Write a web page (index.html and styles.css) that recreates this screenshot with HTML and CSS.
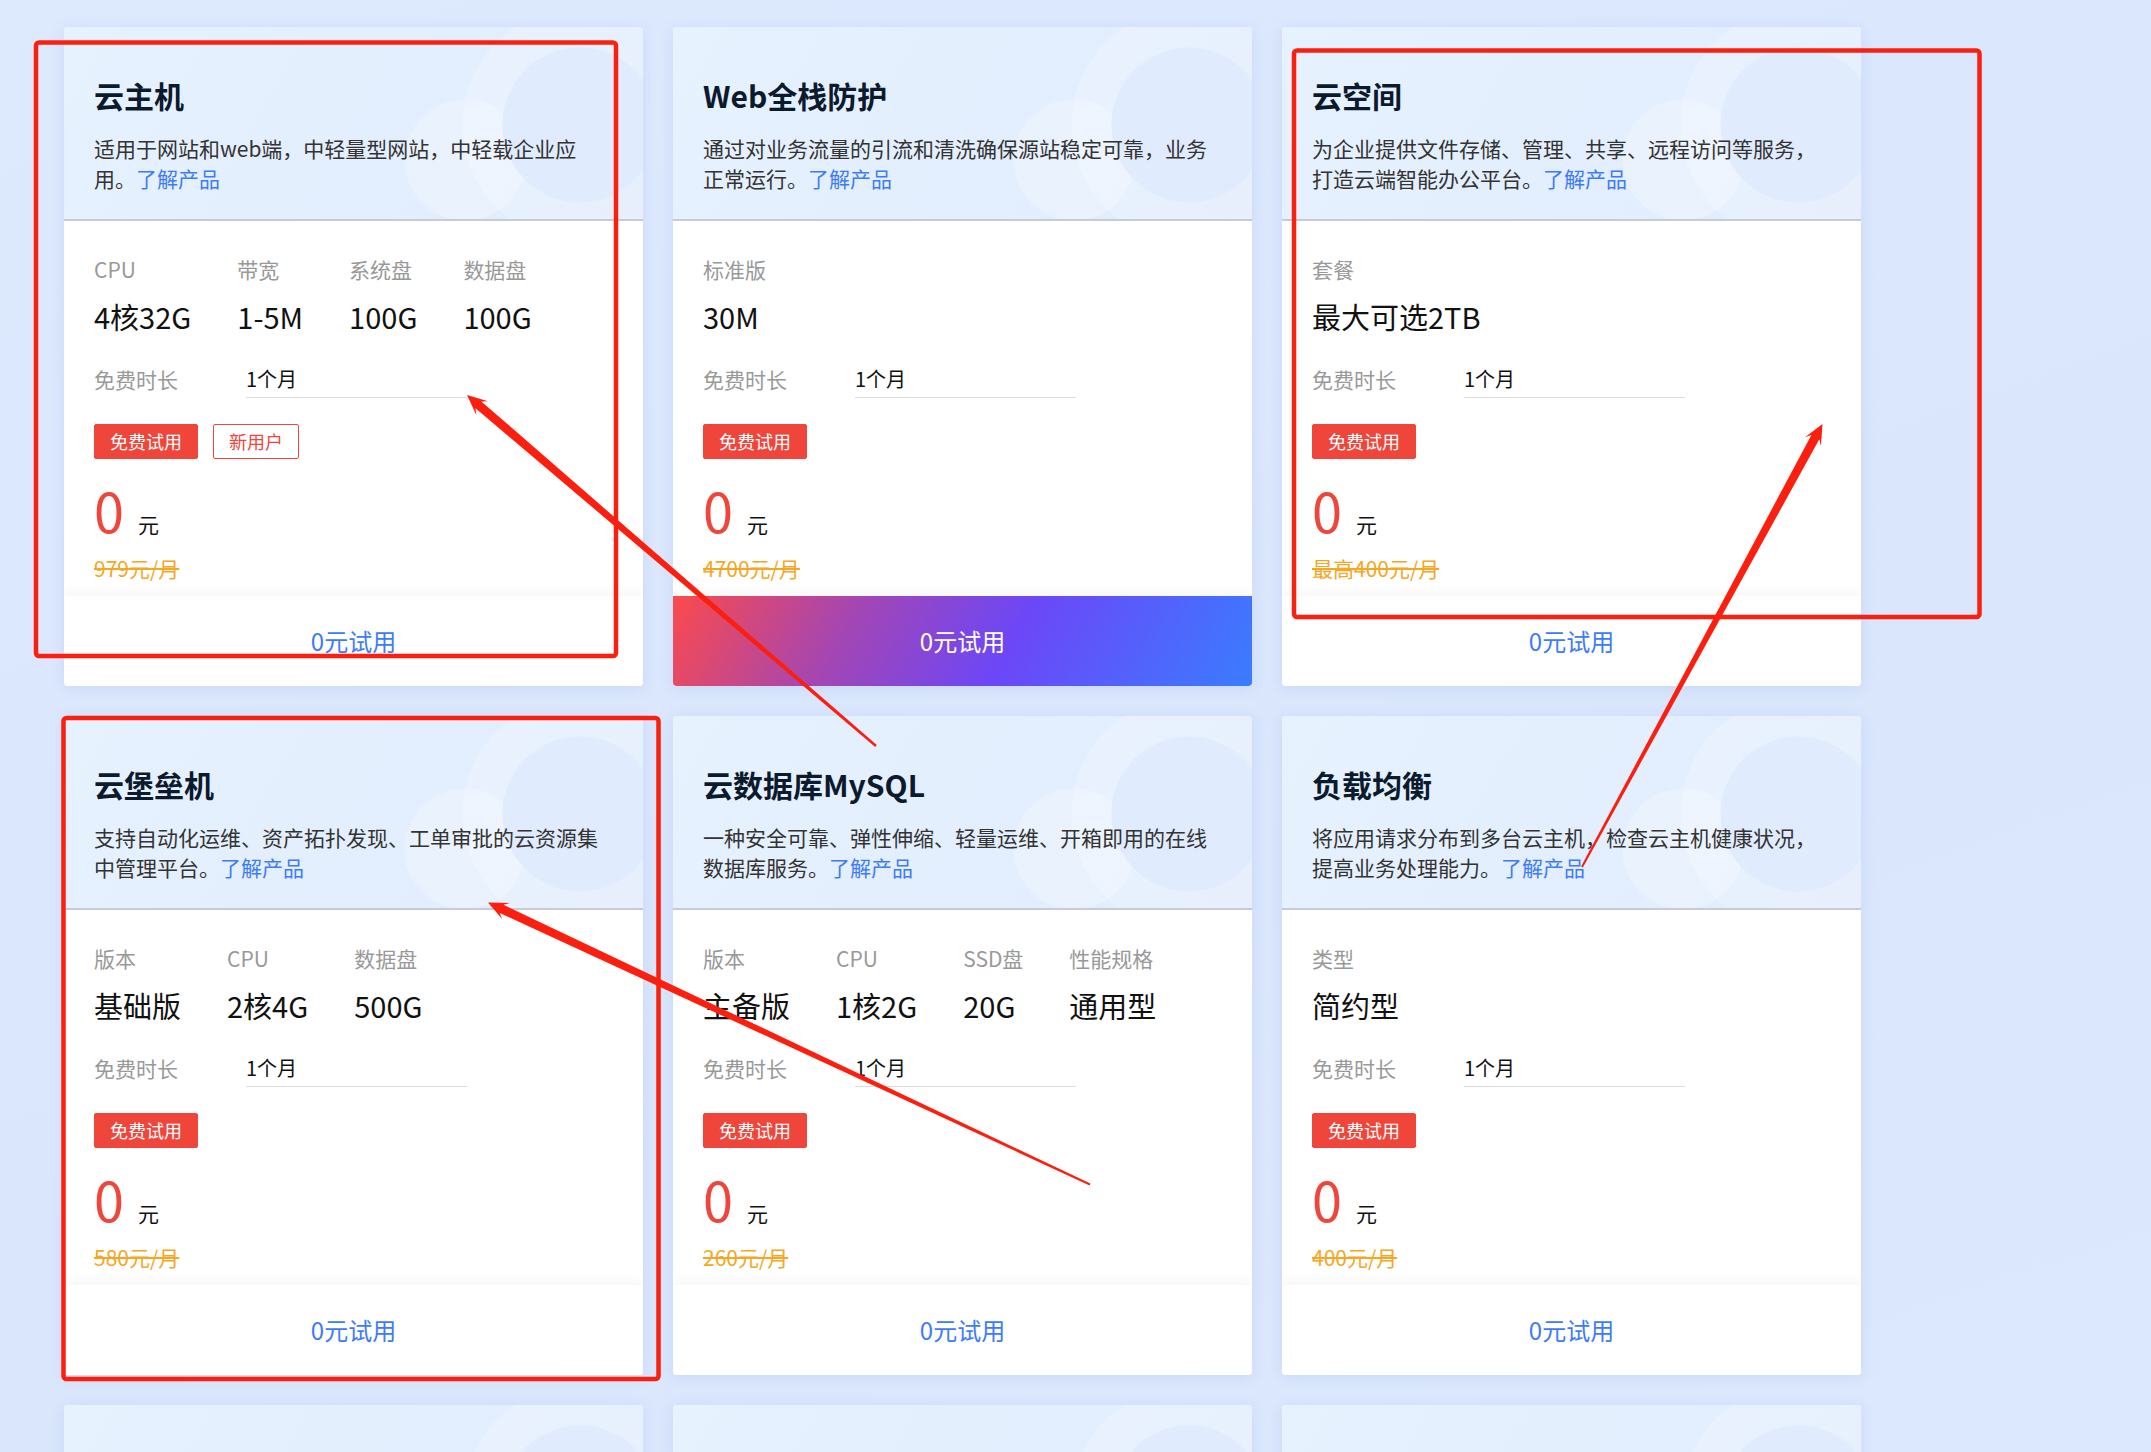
FILE: index.html
```html
<!DOCTYPE html>
<html lang="zh-CN">
<head>
    <meta charset="UTF-8">
    <meta name="viewport" content="width=device-width, initial-scale=1.0">
    <title>免费试用 - 云产品</title>
    <link rel="stylesheet" href="styles.css">
</head>
<body>
    <div class="page">
        <section class="product-list">
            <!-- 云主机 -->
            <div class="product-card">
                <div class="card-head">
                    <h3 class="card-title">云主机</h3>
                    <p class="card-desc">适用于网站和web端，中轻量型网站，中轻载企业应用。<a href="#">了解产品</a></p>
                </div>
                <div class="card-body">
                    <ul class="spec-list">
                        <li><span class="spec-label">CPU</span><span class="spec-value">4核32G</span></li>
                        <li><span class="spec-label">带宽</span><span class="spec-value">1-5M</span></li>
                        <li><span class="spec-label">系统盘</span><span class="spec-value">100G</span></li>
                        <li><span class="spec-label">数据盘</span><span class="spec-value">100G</span></li>
                    </ul>
                    <div class="duration"><span class="duration-label">免费时长</span><span class="duration-value">1个月</span></div>
                    <div class="tags"><span class="tag tag-fill">免费试用</span><span class="tag tag-line">新用户</span></div>
                    <div class="price"><span class="price-num">0</span><span class="price-unit">元</span></div>
                    <div class="price-origin">979元/月</div>
                </div>
                <a class="card-foot" href="#">0元试用</a>
            </div>

            <!-- Web全栈防护 -->
            <div class="product-card">
                <div class="card-head">
                    <h3 class="card-title">Web全栈防护</h3>
                    <p class="card-desc">通过对业务流量的引流和清洗确保源站稳定可靠，业务正常运行。<a href="#">了解产品</a></p>
                </div>
                <div class="card-body">
                    <ul class="spec-list">
                        <li><span class="spec-label">标准版</span><span class="spec-value">30M</span></li>
                    </ul>
                    <div class="duration"><span class="duration-label">免费时长</span><span class="duration-value">1个月</span></div>
                    <div class="tags"><span class="tag tag-fill">免费试用</span></div>
                    <div class="price"><span class="price-num">0</span><span class="price-unit">元</span></div>
                    <div class="price-origin">4700元/月</div>
                </div>
                <a class="card-foot active" href="#">0元试用</a>
            </div>

            <!-- 云空间 -->
            <div class="product-card">
                <div class="card-head">
                    <h3 class="card-title">云空间</h3>
                    <p class="card-desc">为企业提供文件存储、管理、共享、远程访问等服务，打造云端智能办公平台。<a href="#">了解产品</a></p>
                </div>
                <div class="card-body">
                    <ul class="spec-list">
                        <li><span class="spec-label">套餐</span><span class="spec-value">最大可选2TB</span></li>
                    </ul>
                    <div class="duration"><span class="duration-label">免费时长</span><span class="duration-value">1个月</span></div>
                    <div class="tags"><span class="tag tag-fill">免费试用</span></div>
                    <div class="price"><span class="price-num">0</span><span class="price-unit">元</span></div>
                    <div class="price-origin">最高400元/月</div>
                </div>
                <a class="card-foot" href="#">0元试用</a>
            </div>

            <!-- 云堡垒机 -->
            <div class="product-card">
                <div class="card-head">
                    <h3 class="card-title">云堡垒机</h3>
                    <p class="card-desc">支持自动化运维、资产拓扑发现、工单审批的云资源集中管理平台。<a href="#">了解产品</a></p>
                </div>
                <div class="card-body">
                    <ul class="spec-list">
                        <li><span class="spec-label">版本</span><span class="spec-value">基础版</span></li>
                        <li><span class="spec-label">CPU</span><span class="spec-value">2核4G</span></li>
                        <li><span class="spec-label">数据盘</span><span class="spec-value">500G</span></li>
                    </ul>
                    <div class="duration"><span class="duration-label">免费时长</span><span class="duration-value">1个月</span></div>
                    <div class="tags"><span class="tag tag-fill">免费试用</span></div>
                    <div class="price"><span class="price-num">0</span><span class="price-unit">元</span></div>
                    <div class="price-origin">580元/月</div>
                </div>
                <a class="card-foot" href="#">0元试用</a>
            </div>

            <!-- 云数据库MySQL -->
            <div class="product-card">
                <div class="card-head">
                    <h3 class="card-title">云数据库MySQL</h3>
                    <p class="card-desc">一种安全可靠、弹性伸缩、轻量运维、开箱即用的在线数据库服务。<a href="#">了解产品</a></p>
                </div>
                <div class="card-body">
                    <ul class="spec-list">
                        <li><span class="spec-label">版本</span><span class="spec-value">主备版</span></li>
                        <li><span class="spec-label">CPU</span><span class="spec-value">1核2G</span></li>
                        <li><span class="spec-label">SSD盘</span><span class="spec-value">20G</span></li>
                        <li><span class="spec-label">性能规格</span><span class="spec-value">通用型</span></li>
                    </ul>
                    <div class="duration"><span class="duration-label">免费时长</span><span class="duration-value">1个月</span></div>
                    <div class="tags"><span class="tag tag-fill">免费试用</span></div>
                    <div class="price"><span class="price-num">0</span><span class="price-unit">元</span></div>
                    <div class="price-origin">260元/月</div>
                </div>
                <a class="card-foot" href="#">0元试用</a>
            </div>

            <!-- 负载均衡 -->
            <div class="product-card">
                <div class="card-head">
                    <h3 class="card-title">负载均衡</h3>
                    <p class="card-desc">将应用请求分布到多台云主机，检查云主机健康状况，提高业务处理能力。<a href="#">了解产品</a></p>
                </div>
                <div class="card-body">
                    <ul class="spec-list">
                        <li><span class="spec-label">类型</span><span class="spec-value">简约型</span></li>
                    </ul>
                    <div class="duration"><span class="duration-label">免费时长</span><span class="duration-value">1个月</span></div>
                    <div class="tags"><span class="tag tag-fill">免费试用</span></div>
                    <div class="price"><span class="price-num">0</span><span class="price-unit">元</span></div>
                    <div class="price-origin">400元/月</div>
                </div>
                <a class="card-foot" href="#">0元试用</a>
            </div>

            <!-- next row, cut off by the window -->
            <div class="product-card"><div class="card-head card-head-empty"></div></div>
            <div class="product-card"><div class="card-head card-head-empty"></div></div>
            <div class="product-card"><div class="card-head card-head-empty"></div></div>
        </section>

        <!-- review marks drawn over the page -->
        <svg class="marks" width="2151" height="1452" viewBox="0 0 2151 1452">
            <g fill="none" stroke="#fb1f10" stroke-width="4.5">
                <rect x="36" y="42.5" width="580" height="613.5" rx="3"/>
                <rect x="1294" y="50.5" width="685.5" height="566.5" rx="3"/>
                <rect x="63.5" y="718" width="595" height="661" rx="3"/>
            </g>
            <g fill="#fb1f10">
                <polygon points="467,395 476.3,414.9 475.5,408.2 875.2,746.9 876.8,745.1 481.3,401.4 488,401.2"/>
                <polygon points="488,902.5 502.3,919.2 499.7,912.9 1089.6,1185.4 1090.4,1183.6 503.5,904.8 509.9,902.9"/>
                <polygon points="1822.5,424 1805,437.3 1811.4,435 1581.1,866.5 1582.9,867.5 1819.3,439.3 1820.9,445.9"/>
            </g>
        </svg>
    </div>
</body>
</html>
```

FILE: styles.css
```css
/* General */
body {
    margin: 0;
    padding: 0;
    background: #dce8fd;
    font-family: "Noto Sans CJK SC", "Noto Sans", sans-serif;
    color: #222;
}

.page {
    position: relative;
    height: 1452px;
    overflow: hidden;
    background: linear-gradient(160deg, #dde9fd 0%, #d9e6fc 60%, #dce8fd 100%);
}

/* Product grid */
.product-list {
    display: grid;
    grid-template-columns: repeat(3, 579px);
    column-gap: 30px;
    row-gap: 30px;
    padding: 27px 0 0 64px;
}

.product-card {
    display: flex;
    flex-direction: column;
    background: #fff;
    border-radius: 4px;
    overflow: hidden;
    box-shadow: 0 2px 14px rgba(120, 150, 215, 0.18);
}

/* Card head */
.card-head {
    position: relative;
    padding: 48px 30px 26px;
    border-bottom: 2px solid #c6ccd7;
    background:
        radial-gradient(circle at 516px 98px, #e0ebfd 0, #e0ebfd 77px, rgba(224, 235, 253, 0) 78px),
        radial-gradient(circle at 516px 98px, rgba(255, 255, 255, 0.22) 0, rgba(255, 255, 255, 0.22) 117px, rgba(255, 255, 255, 0) 118px),
        radial-gradient(circle at 401px 133px, rgba(255, 255, 255, 0.26) 0, rgba(255, 255, 255, 0.26) 60px, rgba(255, 255, 255, 0) 61px),
        linear-gradient(120deg, #e7f2ff 0%, #e0ebfd 100%);
}

.card-head-empty {
    height: 120px;
    border-bottom: none;
}

.card-title {
    margin: 0;
    font-size: 30px;
    line-height: 40px;
    font-weight: 700;
    color: #0c1a2e;
}

.card-desc {
    margin: 18px 0 0;
    font-size: 21px;
    line-height: 30px;
    color: #333;
}

.card-desc a {
    color: #3d7bfa;
    text-decoration: none;
}

/* Card body */
.card-body {
    padding: 34px 30px 13px;
}

.spec-list {
    display: flex;
    gap: 46px;
    list-style: none;
    margin: 0;
    padding: 0;
}

.spec-list li {
    display: flex;
    flex-direction: column;
}

.spec-label {
    font-size: 21px;
    line-height: 28px;
    color: #999;
}

.spec-value {
    margin-top: 13px;
    font-size: 29px;
    line-height: 40px;
    color: #111;
}

.duration {
    display: flex;
    margin-top: 25px;
}

.duration-label {
    width: 152px;
    font-size: 21px;
    line-height: 36px;
    color: #999;
}

.duration-value {
    width: 221px;
    font-size: 20px;
    line-height: 36px;
    color: #111;
    border-bottom: 1px solid #dcdcdc;
}

.tags {
    display: flex;
    gap: 15px;
    margin-top: 26px;
}

.tag {
    padding: 0 15px;
    font-size: 18px;
    line-height: 33px;
    border: 1px solid #f0453a;
    border-radius: 2px;
}

.tag-fill {
    background: #f0453a;
    color: #fff;
}

.tag-line {
    color: #f0453a;
}

.price {
    display: flex;
    align-items: baseline;
    height: 60px;
    margin-top: 21px;
}

.price-num {
    font-size: 54px;
    line-height: 60px;
    color: #f0453a;
}

.price-unit {
    margin-left: 14px;
    font-size: 21px;
    line-height: 24px;
    color: #111;
}

.price-origin {
    margin-top: 13px;
    font-size: 21px;
    line-height: 30px;
    color: #f5a623;
    text-decoration: line-through;
}

/* Card foot */
.card-foot {
    position: relative;
    display: block;
    height: 90px;
    line-height: 90px;
    text-align: center;
    font-size: 24px;
    color: #3d7bfa;
    text-decoration: none;
    background: #fff;
    box-shadow: 0 -5px 10px rgba(0, 0, 0, 0.035);
}

.card-foot.active {
    color: #fff;
    background: linear-gradient(118deg, #fb4a4c 0%, #a446b3 30%, #6c47f7 58%, #3a7cff 100%);
}

/* Review marks */
.marks {
    position: absolute;
    top: 0;
    left: 0;
    pointer-events: none;
}
```
